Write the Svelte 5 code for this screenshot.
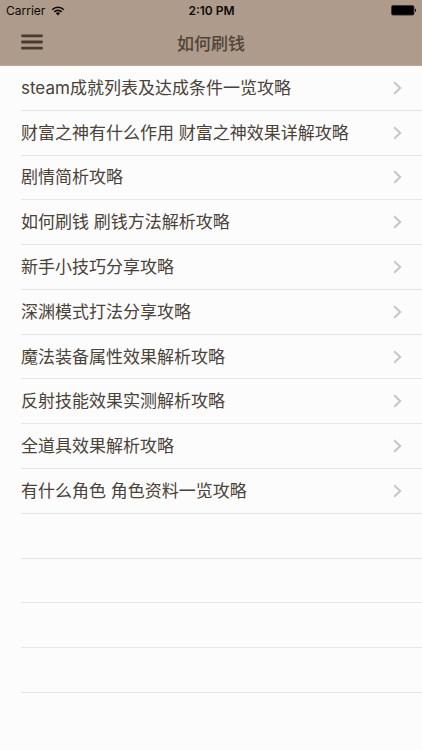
<script>
  const guides = [
    'steam成就列表及达成条件一览攻略',
    '财富之神有什么作用 财富之神效果详解攻略',
    '剧情简析攻略',
    '如何刷钱 刷钱方法解析攻略',
    '新手小技巧分享攻略',
    '深渊模式打法分享攻略',
    '魔法装备属性效果解析攻略',
    '反射技能效果实测解析攻略',
    '全道具效果解析攻略',
    '有什么角色 角色资料一览攻略'
  ];
  const emptyRows = [1, 2, 3, 4];
</script>

<div class="screen">
  <header>
    <div class="status">
      <div class="carrier">
        <span>Carrier</span>
        <svg width="14" height="10" viewBox="0 0 14 10" aria-hidden="true">
          <path d="M1.2 3.7a8.2 8.2 0 0 1 11.6 0M3.3 5.9a5.2 5.2 0 0 1 7.4 0" fill="none" stroke="#0c0907" stroke-width="1.6" />
          <path d="M4.8 7.3a3.1 3.1 0 0 1 4.4 0L7 9.6z" fill="#0c0907" />
        </svg>
      </div>
      <time>2:10 PM</time>
      <svg class="battery" width="26" height="11" viewBox="0 0 26 11" aria-hidden="true">
        <rect x="0.5" y="0.5" width="22.5" height="9.6" rx="1.6" fill="#000" stroke="#3a3029" stroke-width="0.8" />
        <path d="M24 3.6c1.4.4 1.4 3 0 3.4z" fill="#000" />
      </svg>
    </div>
    <nav>
      <button aria-label="菜单">
        <svg width="22" height="16" viewBox="0 0 22 16" aria-hidden="true">
          <path d="M1.4 1.8h19.2M1.4 8h19.2M1.4 14.2h19.2" stroke="#493b30" stroke-width="2.8" stroke-linecap="round" />
        </svg>
      </button>
      <h1>如何刷钱</h1>
    </nav>
  </header>

  <ul>
    {#each guides as guide}
      <li>
        <a href="#guide">
          <span>{guide}</span>
          <svg width="9" height="14" viewBox="0 0 9 14" aria-hidden="true">
            <path d="M1.2 1.2L7.2 7l-6 5.8" fill="none" stroke="#c5c5c9" stroke-width="2" />
          </svg>
        </a>
      </li>
    {/each}
    {#each emptyRows as row (row)}
      <li aria-hidden="true"></li>
    {/each}
  </ul>
</div>

<style>
  :global(body) {
    margin: 0;
    background: #fcfcfc;
  }

  .screen {
    display: flex;
    flex-direction: column;
    box-sizing: border-box;
    min-height: 100vh;
    padding-bottom: 57px;
    background: #fcfcfc;
    color: #4a4138;
    font-family: Inter, 'Noto Sans CJK SC', sans-serif;
  }

  header {
    background: #ae9b8b;
    border-bottom: 1px solid #b8a79a;
  }

  .status {
    display: grid;
    grid-template-columns: 1fr auto 1fr;
    align-items: center;
    height: 21px;
    padding: 0 5px 0 6px;
    color: #0c0907;
    font-size: 12px;
    line-height: 20px;
  }

  .carrier {
    display: flex;
    align-items: center;
    gap: 6px;
  }

  time {
    font-weight: 600;
  }

  .battery {
    justify-self: end;
  }

  nav {
    display: grid;
    grid-template-columns: 64px 1fr 64px;
    align-items: center;
    height: 44px;
  }

  button {
    display: flex;
    align-items: center;
    justify-content: center;
    height: 42px;
    padding: 0;
    border: 0;
    background: none;
  }

  nav {
    align-items: start;
  }

  h1 {
    margin: 0;
    color: #514438;
    font-size: 17px;
    font-weight: 500;
    line-height: 46px;
    text-align: center;
  }

  ul {
    display: grid;
    flex: 1;
    grid-auto-rows: minmax(44px, 1fr);
    margin: 0;
    padding: 0 0 0 21px;
    list-style: none;
  }

  li {
    display: flex;
    border-bottom: 1px solid #e6e6e9;
  }

  a {
    display: flex;
    flex: 1;
    align-items: center;
    justify-content: space-between;
    padding-right: 20px;
    color: inherit;
    font-size: 17px;
    line-height: 24px;
    text-decoration: none;
  }
</style>
